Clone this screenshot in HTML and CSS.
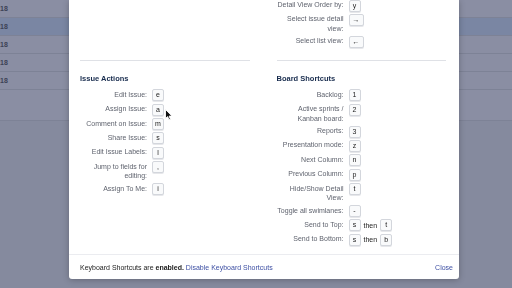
FILE: index.html
```html
<!DOCTYPE html>
<html>
<head>
	<title>Keyboard Shortcuts</title>
	<link rel="stylesheet" href="styles.css">
</head>
<body>

	<div class="board">
		<div class="board-row">18</div>
		<div class="board-row selected">18</div>
		<div class="board-row">18</div>
		<div class="board-row">18</div>
		<div class="board-row">18</div>
		<div class="board-row tall"></div>
	</div>

	<div class="dialog">
		<div class="dialog-body">
			<div class="col"></div>
			<div class="col top">
				<div class="shortcut"><span class="label">Detail View Order by:</span><span class="keys"><kbd>y</kbd></span></div>
				<div class="shortcut"><span class="label">Select issue detail view:</span><span class="keys"><kbd class="wide">&rarr;</kbd></span></div>
				<div class="shortcut"><span class="label">Select list view:</span><span class="keys"><kbd class="wide">&larr;</kbd></span></div>
			</div>

			<hr class="divider">
			<hr class="divider">

			<div class="col">
				<h3>Issue Actions</h3>
				<div class="shortcut"><span class="label">Edit Issue:</span><span class="keys"><kbd>e</kbd></span></div>
				<div class="shortcut"><span class="label">Assign Issue:</span><span class="keys"><kbd>a</kbd></span></div>
				<div class="shortcut"><span class="label">Comment on Issue:</span><span class="keys"><kbd>m</kbd></span></div>
				<div class="shortcut"><span class="label">Share Issue:</span><span class="keys"><kbd>s</kbd></span></div>
				<div class="shortcut"><span class="label">Edit Issue Labels:</span><span class="keys"><kbd>l</kbd></span></div>
				<div class="shortcut"><span class="label">Jump to fields for editing:</span><span class="keys"><kbd>,</kbd></span></div>
				<div class="shortcut"><span class="label">Assign To Me:</span><span class="keys"><kbd>i</kbd></span></div>
			</div>

			<div class="col">
				<h3>Board Shortcuts</h3>
				<div class="shortcut"><span class="label">Backlog:</span><span class="keys"><kbd>1</kbd></span></div>
				<div class="shortcut"><span class="label">Active sprints / Kanban board:</span><span class="keys"><kbd>2</kbd></span></div>
				<div class="shortcut"><span class="label">Reports:</span><span class="keys"><kbd>3</kbd></span></div>
				<div class="shortcut"><span class="label">Presentation mode:</span><span class="keys"><kbd>z</kbd></span></div>
				<div class="shortcut"><span class="label">Next Column:</span><span class="keys"><kbd>n</kbd></span></div>
				<div class="shortcut"><span class="label">Previous Column:</span><span class="keys"><kbd>p</kbd></span></div>
				<div class="shortcut"><span class="label">Hide/Show Detail View:</span><span class="keys"><kbd>t</kbd></span></div>
				<div class="shortcut"><span class="label">Toggle all swimlanes:</span><span class="keys"><kbd>-</kbd></span></div>
				<div class="shortcut"><span class="label">Send to Top:</span><span class="keys"><kbd>s</kbd> then <kbd>t</kbd></span></div>
				<div class="shortcut"><span class="label">Send to Bottom:</span><span class="keys"><kbd>s</kbd> then <kbd>b</kbd></span></div>
			</div>
		</div>

		<div class="dialog-footer">
			<span>Keyboard Shortcuts are <strong>enabled.</strong> <a href="#">Disable Keyboard Shortcuts</a></span>
			<a href="#">Close</a>
		</div>
	</div>

	<svg class="cursor" width="8" height="12" viewBox="0 0 8 12">
		<path d="M0.5 0.5 L0.5 9.5 L2.6 7.6 L4 10.8 L5.4 10.2 L4.1 7.1 L7 7.1 Z" fill="#111" stroke="#fff" stroke-width="0.9"/>
	</svg>

</body>
</html>
```

FILE: styles.css
```css
body{
	margin: 0;
	background: #858a9e;
	font-family: "Liberation Sans", Arial, sans-serif;
	overflow: hidden;
}

.board-row{
	height: 17px;
	line-height: 17px;
	border-bottom: 1px solid #7d8296;
	background: #8a8ea3;
	color: #3d4256;
	font-size: 7px;
	font-weight: bold;
}

.board-row.selected{
	background: #7a86a3;
}

.board-row.tall{
	height: 30px;
}

.dialog{
	position: absolute;
	left: 69px;
	top: 0;
	width: 390px;
	height: 279px;
	background: #fff;
	border-radius: 0 0 3px 3px;
	box-shadow: 0 1px 6px rgba(0,0,0,.25);
	display: flex;
	flex-direction: column;
}

.dialog-body{
	flex: 1;
	padding: 0 13px 0 11px;
	display: grid;
	grid-template-columns: 1fr 1fr;
	column-gap: 27px;
	align-content: start;
	will-change: transform;
}

.col.top{
	margin-top: -0.5px;
}

.col.top .shortcut:last-child{
	margin-bottom: 0;
}

.divider{
	border: 0;
	border-top: 1px solid #dfe1e6;
	margin: 12px 0 0;
}

h3{
	margin: 12px 0 5.5px;
	font-size: 7.5px;
	line-height: 11px;
	color: #172b4d;
}

.shortcut{
	display: flex;
	align-items: flex-start;
	margin-bottom: 2.4px;
}

.label{
	width: 67px;
	flex-shrink: 0;
	text-align: right;
	font-size: 7px;
	line-height: 9.5px;
	padding-top: 0.5px;
	color: #5f636e;
}

.keys{
	display: flex;
	align-items: center;
	gap: 3px;
	margin-left: 5px;
	font-size: 7px;
	color: #222;
}

kbd{
	display: inline-block;
	box-sizing: border-box;
	min-width: 12px;
	height: 12px;
	line-height: 10px;
	text-align: center;
	font-family: "Liberation Sans", Arial, sans-serif;
	font-size: 7px;
	color: #222;
	background: #f9fafb;
	border: 1px solid #d3d6dc;
	border-radius: 2px;
	box-shadow: 0 1px 0 #e6e7ea;
}

kbd.wide{
	min-width: 15px;
}

.dialog-footer{
	height: 24px;
	border-top: 1px solid #ebecf0;
	padding: 0 6px 0 11px;
	display: flex;
	align-items: center;
	justify-content: space-between;
	font-size: 7px;
	color: #222;
	will-change: transform;
}

.dialog-footer a{
	color: #3d4fa3;
	text-decoration: none;
}

.cursor{
	position: absolute;
	left: 165px;
	top: 109px;
}
```
